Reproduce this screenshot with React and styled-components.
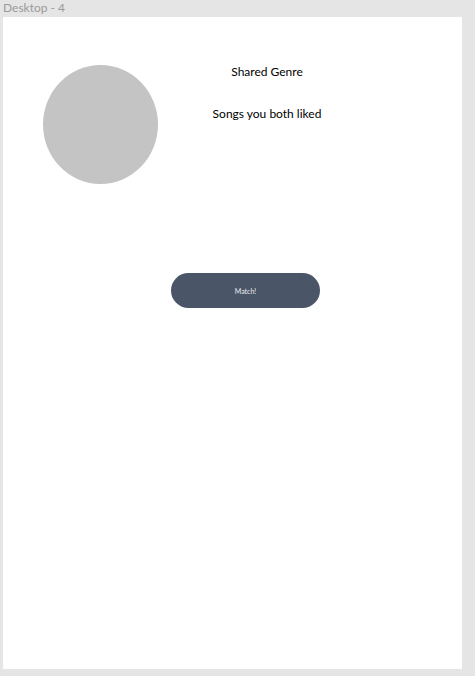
import React from 'react';
import styled, { createGlobalStyle } from 'styled-components';

const GlobalStyle = createGlobalStyle`
    html, body {
        margin: 0;
        padding: 0;
        background: #e5e5e5;
        font-family: Lato, "Noto Sans", sans-serif;
    }
`;

const Canvas = styled.div`
    width: 475px;
    height: 676px;
    background: #e5e5e5;
    padding: 0 0 0 3px;
    box-sizing: border-box;
    overflow: hidden;
`;

const FrameLabel = styled.div`
    height: 17px;
    line-height: 17px;
    font-size: 12px;
    color: #9a9a9a;
    margin-top: -1px;
    margin-bottom: 1px;
`;

const Frame = styled.div`
    width: 459px;
    height: 652px;
    background: #ffffff;
    padding: 48px 0 0 40px;
    box-sizing: border-box;
`;

const TopRow = styled.div`
    display: flex;
    align-items: flex-start;
`;

const Avatar = styled.div`
    width: 115px;
    height: 119px;
    border-radius: 50%;
    background: #c4c4c4;
    flex-shrink: 0;
`;

const Info = styled.div`
    width: 190px;
    margin-left: 14px;
    margin-top: -1px;
    display: flex;
    flex-direction: column;
    align-items: center;
    gap: 27px;
`;

const Label = styled.div`
    font-size: 12px;
    line-height: 15px;
    color: #000;
`;

const MatchButton = styled.button`
    display: block;
    margin: 89px 0 0 128px;
    width: 149px;
    height: 35px;
    border: none;
    border-radius: 17.5px;
    background: #4a5567;
    color: #e8ebef;
    font-family: Lato, "Noto Sans", sans-serif;
    font-size: 7px;
    cursor: pointer;
`;

const App = () => {
    return (
        <>
            <GlobalStyle />
            <Canvas>
                <FrameLabel>Desktop - 4</FrameLabel>
                <Frame>
                    <TopRow>
                        <Avatar />
                        <Info>
                            <Label>Shared Genre</Label>
                            <Label>Songs you both liked</Label>
                        </Info>
                    </TopRow>
                    <MatchButton>Match!</MatchButton>
                </Frame>
            </Canvas>
        </>
    );
};

export default App;
